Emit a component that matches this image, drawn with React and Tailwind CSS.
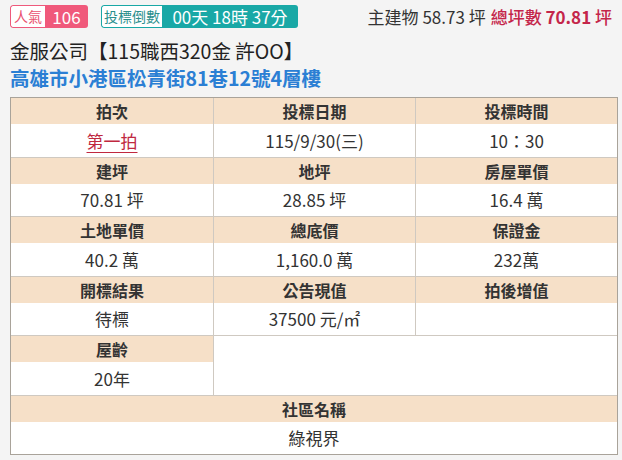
const font = { fontFamily: '"Noto Sans CJK TC", "Noto Sans", sans-serif' };

const rows = [
  [
    ["拍次", "第一拍", true],
    ["投標日期", "115/9/30(三)"],
    ["投標時間", "10：30"],
  ],
  [
    ["建坪", "70.81 坪"],
    ["地坪", "28.85 坪"],
    ["房屋單價", "16.4 萬"],
  ],
  [
    ["土地單價", "40.2 萬"],
    ["總底價", "1,160.0 萬"],
    ["保證金", "232萬"],
  ],
  [
    ["開標結果", "待標"],
    ["公告現值", "37500 元/㎡"],
    ["拍後增值", ""],
  ],
];

function Cell({ label, value, red, first }) {
  return (
    <div className={first ? "" : "border-l border-[#cfc9c1]"}>
      <div className="h-[26px] bg-[#f6e0c8] flex items-center justify-center text-[16px] font-bold text-[#333]">
        {label}
      </div>
      <div className="h-[32.5px] bg-white flex items-center justify-center text-[17px] text-[#333]">
        {red ? (
          <span className="text-[#c0283f] underline underline-offset-4 decoration-1">{value}</span>
        ) : (
          value
        )}
      </div>
    </div>
  );
}

export default function App() {
  return (
    <div className="w-[622px] h-[460px] bg-[#f4f4f4] px-[10px] pt-[5px] overflow-hidden" style={font}>
      {/* top bar */}
      <div className="flex items-center justify-between h-[23px]">
        <div className="flex items-center gap-[13px]">
          <div className="flex h-[23px] rounded-[3px] overflow-hidden">
            <div className="w-[35px] bg-white border border-r-0 border-[#ee5a7c] rounded-l-[3px] flex items-center justify-center text-[14px] text-[#e9506f]">
              人氣
            </div>
            <div className="w-[43px] bg-[#f0597b] flex items-center justify-center text-[17px] text-white">
              106
            </div>
          </div>
          <div className="flex h-[23px] rounded-[3px] overflow-hidden">
            <div className="w-[61px] bg-white border border-r-0 border-[#19a8a6] rounded-l-[3px] flex items-center justify-center text-[14px] text-[#2b8f8d]">
              投標倒數
            </div>
            <div className="w-[136px] bg-[#19a8a6] flex items-center justify-center whitespace-nowrap text-[17px] text-white">
              00天 18時 37分
            </div>
          </div>
        </div>
        <div className="text-[17px] text-[#333] flex items-baseline gap-[5px]">
          <span>主建物 58.73 坪</span>
          <span className="text-[#c4254a] font-medium">
            總坪數 <span className="font-bold">70.81</span> 坪
          </span>
        </div>
      </div>

      {/* titles */}
      <div className="mt-[10px] text-[19.5px] leading-[26px] text-[#222]">金服公司【115職西320金 許OO】</div>
      <div className="text-[19.5px] leading-[28px] font-bold text-[#2b7fd4]">高雄市小港區松青街81巷12號4層樓</div>

      {/* table */}
      <div className="mt-[5px] w-[608px] border border-[#a9a39a] bg-white">
        {rows.map((row, i) => (
          <div key={i} className={"grid grid-cols-3" + (i > 0 ? " border-t border-[#cfc9c1]" : "")}>
            {row.map(([l, v, red], j) => (
              <Cell key={j} label={l} value={v} red={red} first={j === 0} />
            ))}
          </div>
        ))}
        <div className="grid grid-cols-3 border-t border-[#cfc9c1]">
          <Cell label="屋齡" value="20年" first />
          <div className="col-span-2 border-l border-[#cfc9c1] bg-white" />
        </div>
        <div className="border-t border-[#cfc9c1]">
          <div className="h-[26px] bg-[#f6e0c8] flex items-center justify-center text-[16px] font-bold text-[#333]">
            社區名稱
          </div>
          <div className="h-[32.5px] bg-white flex items-center justify-center text-[17px] text-[#333]">
            綠視界
          </div>
        </div>
      </div>
    </div>
  );
}
